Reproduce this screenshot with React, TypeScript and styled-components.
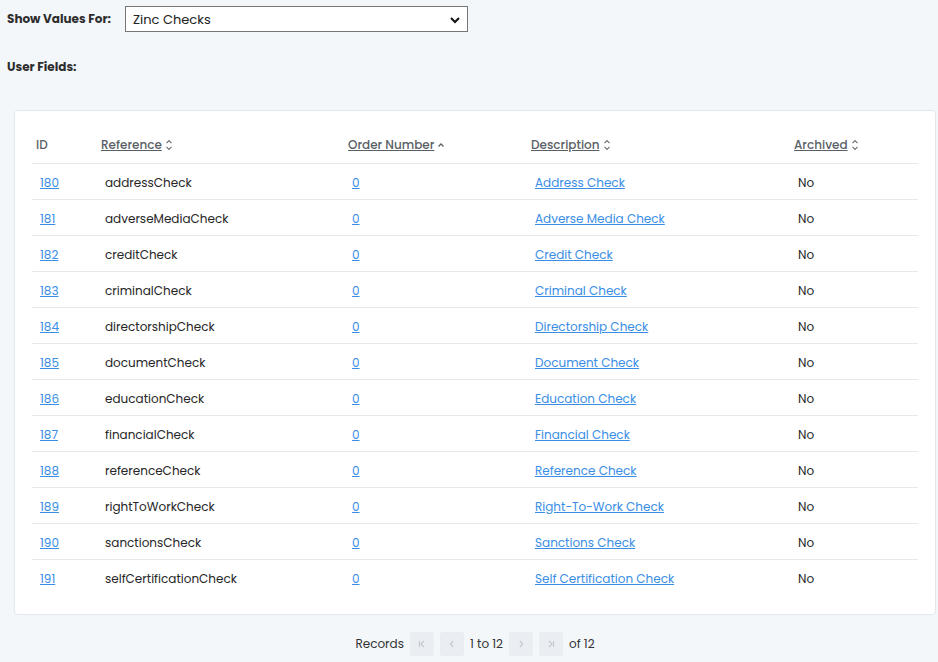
import React from 'react';
import styled, { createGlobalStyle } from 'styled-components';

const GlobalStyle = createGlobalStyle`
  html, body {
    margin: 0;
    padding: 0;
    background: #f4f7fa;
    font-family: Poppins, Inter, "Noto Sans", sans-serif;
    color: #252525;
  }
`;

const Page = styled.div`
  padding: 6px 2px 0 7px;
  min-height: 662px;
  box-sizing: border-box;
`;

const FilterRow = styled.div`
  display: flex;
  align-items: center;
  height: 26px;
`;

const Label = styled.div`
  font-size: 12px;
  font-weight: 700;
  color: #2d2d2d;
  width: 118px;
`;

const SelectBox = styled.div`
  width: 343px;
  height: 26px;
  box-sizing: border-box;
  border: 1px solid #767676;
  background: #fff;
  display: flex;
  align-items: center;
  justify-content: space-between;
  padding: 1px 6px 0 7px;
  font-size: 13px;
  color: #222;
`;

const SectionLabel = styled(Label)`
  margin-top: 20px;
  height: 30px;
  display: flex;
  align-items: center;
`;

const Card = styled.div`
  margin: 28px 0 0 7px;
  background: #fff;
  border: 1px solid #e3e6ea;
  border-radius: 4px;
  padding: 16px 17px 19px 17px;
`;

const Table = styled.table`
  width: 100%;
  border-collapse: collapse;
  table-layout: fixed;
  font-size: 12px;
`;

const Th = styled.th<{ $w: number }>`
  width: ${(p) => p.$w}px;
  box-sizing: border-box;
  text-align: left;
  font-weight: 500;
  color: #5a5f66;
  height: 36px;
  padding: 0 0 0 4px;
  border-bottom: 1px solid #e6e8eb;
`;

const SortLink = styled.span`
  display: inline-flex;
  align-items: center;
  gap: 3px;
`;

const Underlined = styled.span`
  text-decoration: underline;
`;

const Td = styled.td<{ $last?: boolean }>`
  height: 32px;
  padding: 3px 0 0 8px;
  color: #262626;
  border-bottom: ${(p) => (p.$last ? 'none' : '1px solid #e6e8eb')};
`;

const CellLink = styled.a`
  color: #3a8ee6;
  text-decoration: underline;
  cursor: pointer;
`;

const Pager = styled.div`
  display: flex;
  justify-content: center;
  align-items: center;
  gap: 6px;
  margin: 17px 0 0 7px;
  font-size: 12px;
  color: #333;
`;

const PageButton = styled.div`
  width: 24px;
  height: 24px;
  border-radius: 3px;
  background: #eaedf1;
  display: flex;
  align-items: center;
  justify-content: center;
`;

const SortBoth = () => (
  <svg width="8" height="12" viewBox="0 0 8 12" fill="none" stroke="#6b7078" strokeWidth="1.2">
    <path d="M1.5 4.2 L4 1.7 L6.5 4.2" />
    <path d="M1.5 7.8 L4 10.3 L6.5 7.8" />
  </svg>
);

const SortUp = () => (
  <svg width="8" height="12" viewBox="0 0 8 12" fill="none" stroke="#5a5f66" strokeWidth="1.3">
    <path d="M1.5 7.5 L4 5 L6.5 7.5" />
  </svg>
);

const Chevron = () => (
  <svg width="12" height="12" viewBox="0 0 12 12" fill="none" stroke="#111" strokeWidth="2">
    <path d="M2 4 L6 8 L10 4" />
  </svg>
);

const PagerIcon = ({ d, bar }: { d: string; bar?: number }) => (
  <svg width="10" height="10" viewBox="0 0 10 10" fill="none" stroke="#c6cad0" strokeWidth="1.2">
    <path d={d} />
    {bar !== undefined && <path d={`M${bar} 2 V8`} />}
  </svg>
);

const rows = [
  [180, 'addressCheck', 'Address Check'],
  [181, 'adverseMediaCheck', 'Adverse Media Check'],
  [182, 'creditCheck', 'Credit Check'],
  [183, 'criminalCheck', 'Criminal Check'],
  [184, 'directorshipCheck', 'Directorship Check'],
  [185, 'documentCheck', 'Document Check'],
  [186, 'educationCheck', 'Education Check'],
  [187, 'financialCheck', 'Financial Check'],
  [188, 'referenceCheck', 'Reference Check'],
  [189, 'rightToWorkCheck', 'Right-To-Work Check'],
  [190, 'sanctionsCheck', 'Sanctions Check'],
  [191, 'selfCertificationCheck', 'Self Certification Check'],
] as const;

export default function App() {
  return (
    <Page>
      <GlobalStyle />
      <FilterRow>
        <Label>Show Values For:</Label>
        <SelectBox>
          Zinc Checks
          <Chevron />
        </SelectBox>
      </FilterRow>
      <SectionLabel>User Fields:</SectionLabel>
      <Card>
        <Table>
          <thead>
            <tr>
              <Th $w={65}>ID</Th>
              <Th $w={247}>
                <SortLink>
                  <Underlined>Reference</Underlined>
                  <SortBoth />
                </SortLink>
              </Th>
              <Th $w={183}>
                <SortLink>
                  <Underlined>Order Number</Underlined>
                  <SortUp />
                </SortLink>
              </Th>
              <Th $w={263}>
                <SortLink>
                  <Underlined>Description</Underlined>
                  <SortBoth />
                </SortLink>
              </Th>
              <Th $w={128}>
                <SortLink>
                  <Underlined>Archived</Underlined>
                  <SortBoth />
                </SortLink>
              </Th>
            </tr>
          </thead>
          <tbody>
            {rows.map(([id, ref, desc], i) => {
              const last = i === rows.length - 1;
              return (
                <tr key={id}>
                  <Td $last={last}>
                    <CellLink>{id}</CellLink>
                  </Td>
                  <Td $last={last}>{ref}</Td>
                  <Td $last={last}>
                    <CellLink>0</CellLink>
                  </Td>
                  <Td $last={last}>
                    <CellLink>{desc}</CellLink>
                  </Td>
                  <Td $last={last}>No</Td>
                </tr>
              );
            })}
          </tbody>
        </Table>
      </Card>
      <Pager>
        <span>Records</span>
        <PageButton>
          <PagerIcon d="M7 2 L4 5 L7 8" bar={2.5} />
        </PageButton>
        <PageButton>
          <PagerIcon d="M6 2 L3.5 5 L6 8" />
        </PageButton>
        <span>1 to 12</span>
        <PageButton>
          <PagerIcon d="M4 2 L6.5 5 L4 8" />
        </PageButton>
        <PageButton>
          <PagerIcon d="M3 2 L6 5 L3 8" bar={7.5} />
        </PageButton>
        <span>of 12</span>
      </Pager>
    </Page>
  );
}
